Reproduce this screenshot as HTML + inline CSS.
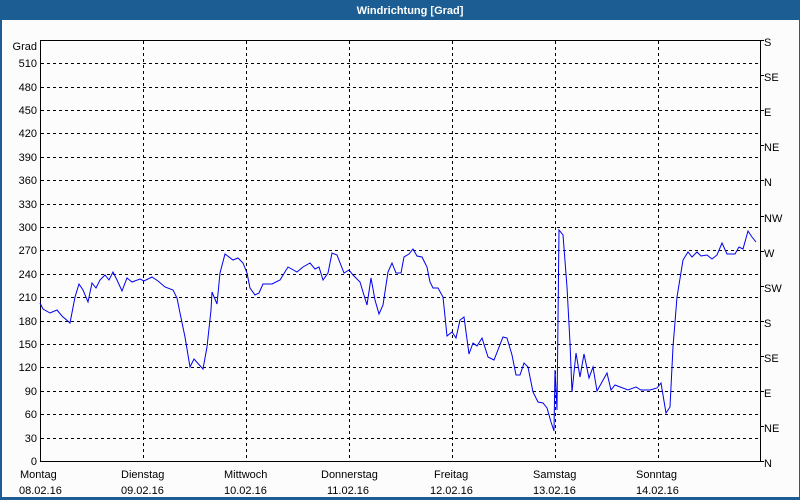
<!DOCTYPE html>
<html><head><meta charset="utf-8"><style>
html,body{margin:0;padding:0;background:#fcfcfc}
svg{display:block}
text{font-family:"Liberation Sans",sans-serif;font-size:11px;fill:#000}
</style></head><body>
<svg width="800" height="500" viewBox="0 0 800 500" xmlns="http://www.w3.org/2000/svg">
<rect x="0" y="0" width="800" height="500" fill="#fcfcfc"/>
<rect x="0" y="0" width="800" height="20" fill="#1c5e94"/>
<rect x="0" y="0" width="2" height="500" fill="#1c5e94"/>
<rect x="799" y="0" width="1" height="500" fill="#1c5e94"/>
<rect x="0" y="497" width="800" height="3" fill="#1c5e94"/>
<text x="410" y="14" text-anchor="middle" style="font-weight:bold;fill:#fff;font-size:11px">Windrichtung [Grad]</text>
<g stroke="#000" stroke-width="1" stroke-dasharray="3,3" fill="none">
<path d="M41 438.5H760M41 414.5H760M41 391.5H760M41 367.5H760M41 344.5H760M41 321.5H760M41 297.5H760M41 274.5H760M41 250.5H760M41 227.5H760M41 204.5H760M41 180.5H760M41 157.5H760M41 133.5H760M41 110.5H760M41 87.5H760M41 63.5H760"/>
<path d="M143.5 41V461M246.5 41V461M349.5 41V461M452.5 41V461M555.5 41V461M658.5 41V461"/>
</g>
<g stroke="#000" stroke-width="1" fill="none">
<path d="M40.5 40V462M40 40.5H761M40 461.5H761M760.5 40V462"/>
<path d="M760 40.5h4M760 426.5h4M760 391.5h4M760 356.5h4M760 321.5h4M760 286.5h4M760 251.5h4M760 216.5h4M760 180.5h4M760 145.5h4M760 110.5h4M760 75.5h4M760 461.5h4"/>
</g>
<g text-anchor="end">
<text x="37" y="50">Grad</text>
<text x="37" y="67">510</text><text x="37" y="91">480</text><text x="37" y="114">450</text><text x="37" y="137">420</text><text x="37" y="161">390</text><text x="37" y="184">360</text><text x="37" y="208">330</text><text x="37" y="231">300</text><text x="37" y="254">270</text><text x="37" y="278">240</text><text x="37" y="301">210</text><text x="37" y="325">180</text><text x="37" y="348">150</text><text x="37" y="371">120</text><text x="37" y="395">90</text><text x="37" y="418">60</text><text x="37" y="442">30</text><text x="37" y="465">0</text>
</g>
<g>
<text x="764" y="467">N</text><text x="764" y="432">NE</text><text x="764" y="397">E</text><text x="764" y="362">SE</text><text x="764" y="327">S</text><text x="764" y="292">SW</text><text x="764" y="257">W</text><text x="764" y="222">NW</text><text x="764" y="186">N</text><text x="764" y="151">NE</text><text x="764" y="116">E</text><text x="764" y="81">SE</text><text x="764" y="46">S</text>
</g>
<g>
<text x="20" y="478">Montag</text><text x="19" y="494">08.02.16</text>
<text x="121" y="478">Dienstag</text><text x="121" y="494">09.02.16</text>
<text x="224" y="478">Mittwoch</text><text x="224" y="494">10.02.16</text>
<text x="321" y="478">Donnerstag</text><text x="327" y="494">11.02.16</text>
<text x="434" y="478">Freitag</text><text x="430" y="494">12.02.16</text>
<text x="533" y="478">Samstag</text><text x="533" y="494">13.02.16</text>
<text x="636" y="478">Sonntag</text><text x="636" y="494">14.02.16</text>
</g>
<polyline fill="none" stroke="#0000ee" stroke-width="1" points="40,303 43,309 50,313 57,310 62,316 70,323 75,297 79,284 83,290 88,302 92,283 96,288 100,280 105,275 109,280 113,272 117,280 122,291 127,278 132,282 140,279 144,281 152,277 158,281 165,287 173,290 177,298 180,313 185,337 190,367 194,359 203,369 207,347 211,310 212,292 217,304 220,273 225,254 233,260 238,258 243,263 247,273 250,288 255,295 259,293 263,284 272,284 280,280 288,267 297,272 303,267 310,263 315,269 319,267 323,280 328,273 332,253 337,255 344,273 349,270 353,275 360,282 363,292 367,305 371,278 375,300 379,314 383,305 388,272 392,263 396,273 401,273 404,257 409,254 413,249 417,256 422,257 427,267 430,282 433,288 438,288 443,297 447,336 452,332 456,338 460,320 464,317 469,354 473,343 477,346 482,338 488,357 494,360 503,337 507,338 512,355 516,375 520,375 524,363 528,367 533,392 538,402 543,403 547,408 551,422 554,431 555,370 557,410 559,230 563,235 567,287 570,343 572,392 576,353 580,377 584,354 589,378 593,367 597,391 607,373 611,390 615,385 628,390 636,387 641,390 650,390 657,388 661,383 666,413 670,407 673,347 677,297 683,260 688,252 692,257 697,252 701,256 707,255 712,259 717,255 722,243 727,254 735,254 739,247 743,249 748,231 752,237 756,242"/>
</svg>
</body></html>
